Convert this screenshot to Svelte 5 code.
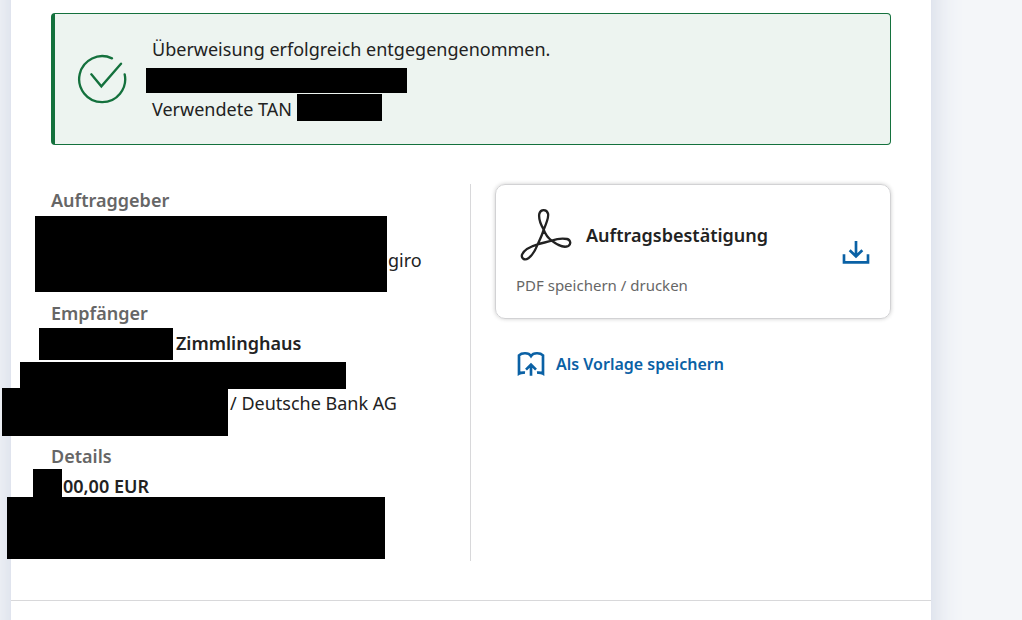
<script>
  const orderer = 'giro';
  const recipient = { name: 'Zimmlinghaus', bank: '/ Deutsche Bank AG' };
  const amount = '00,00 EUR';
</script>

<div class="page">
  <main class="sheet">
    <div class="content">
      <section class="notice" role="status">
        <svg class="check" viewBox="112 162 150 150" aria-hidden="true">
          <path d="M217 175A69 69 0 1 0 255 223M155 223L185 259L244 191" />
        </svg>
        <div class="message">
          <p>Überweisung erfolgreich entgegengenommen.</p>
          <p><span class="mask mask-date"></span></p>
          <p>Verwendete TAN<span class="mask mask-tan"></span></p>
        </div>
      </section>

      <div class="columns">
        <div class="summary">
          <section>
            <h2>Auftraggeber</h2>
            <p></p>
            <p class="after-account">{orderer}</p>
            <span class="mask mask-account"></span>
          </section>
          <section>
            <h2>Empfänger</h2>
            <p class="after-name"><strong>{recipient.name}</strong></p>
            <p></p>
            <p class="after-iban">{recipient.bank}</p>
            <span class="mask mask-name"></span>
            <span class="mask mask-iban"></span>
            <span class="mask mask-bank"></span>
          </section>
          <section>
            <h2>Details</h2>
            <p class="after-amount"><strong>{amount}</strong></p>
            <p></p>
            <p></p>
            <span class="mask mask-amount"></span>
            <span class="mask mask-purpose"></span>
          </section>
        </div>

        <div class="actions">
          <a class="card" href="#pdf">
            <span class="card-body">
              <span class="card-head">
                <svg class="pdf" viewBox="25 20 165 165" aria-hidden="true">
                  <path d="M102 88C112 65 118 50 115 40C111 26 93 26 89 40C86 55 93 72 102 88C108 105 115 113 126 121C145 136 165 142 176 137C185 131 183 119 172 116C155 113 140 116 126 121C112 125 98 128 84 132C60 139 42 150 37 163C34 175 45 181 56 174C68 165 77 150 84 132C92 115 98 103 102 88Z" />
                </svg>
                <strong>Auftragsbestätigung</strong>
              </span>
              <span class="card-note">PDF speichern / drucken</span>
            </span>
            <svg class="icon" viewBox="21 21 84 84" aria-hidden="true">
              <path d="M63 30V75M44 58L63 76L82 58M27 70V94H99V70" />
            </svg>
          </a>
          <button class="template" type="button">
            <svg class="icon" viewBox="22 18 84 84" aria-hidden="true">
              <path d="M46 86C38 85 33 86 28 89V34C36 26 57 25 64 36C71 25 92 26 100 34V89C95 86 90 85 82 86M64 95V63M49 77L64 62L79 77" />
            </svg>
            Als Vorlage speichern
          </button>
        </div>
      </div>
    </div>
    <footer></footer>
  </main>
</div>

<style>
  :global(body) {
    margin: 0;
    background: #f4f6f9;
  }

  .page {
    overflow: hidden;
    padding: 0 91px 0 11px;
  }

  /* The sheet runs past the top and bottom so that its shadow stays even. */
  .sheet {
    box-sizing: border-box;
    min-height: calc(100vh + 80px);
    margin: -40px 0;
    padding: 40px 0;
    background: #fff;
    box-shadow: 0 0 30px #cdd3e2;
    color: #222;
    font: 18px/30px "Noto Sans", "Open Sans", sans-serif;
  }

  .content {
    padding: 13px 40px 39px;
  }

  p,
  h2 {
    min-height: 30px;
    margin: 0;
    font-size: 18px;
    line-height: 30px;
  }

  h2 {
    color: #666;
    font-weight: 600;
  }

  strong {
    font-weight: 600;
  }

  svg {
    flex: none;
    fill: none;
    stroke: currentColor;
  }

  .notice {
    display: flex;
    align-items: center;
    gap: 25px;
    padding: 20px 22px;
    border: 1px solid #14713d;
    border-left-width: 4px;
    border-radius: 4px;
    background: #edf4f0;
  }

  .check {
    width: 50px;
    height: 50px;
    color: #14713d;
    stroke-width: 7;
    stroke-linecap: round;
  }

  .message p {
    position: relative;
  }

  .columns {
    display: grid;
    grid-template-columns: 1fr 1fr;
    margin-top: 39px;
  }

  .summary {
    display: flex;
    flex-direction: column;
    gap: 23px;
    padding-top: 1px;
    border-right: 1px solid #d8d8da;
  }

  .summary section {
    position: relative;
  }

  .mask {
    position: absolute;
    background: #000;
  }

  .mask-date { left: -6px; top: 4px; width: 261px; height: 25px; }
  .mask-tan { left: 145px; top: 0; width: 85px; height: 27px; }
  .mask-account { left: -16px; top: 31px; width: 352px; height: 76px; }
  .mask-name { left: -12px; top: 30px; width: 134px; height: 32px; }
  .mask-iban { left: -31px; top: 64px; width: 326px; height: 27px; }
  .mask-bank { left: -49px; top: 90px; width: 226px; height: 48px; }
  .mask-amount { left: -18px; top: 28px; width: 29px; height: 29px; }
  .mask-purpose { left: -44px; top: 56px; width: 378px; height: 62px; }

  .after-account { padding-left: 337px; }
  .after-name { padding-left: 125px; }
  .after-iban { padding-left: 179px; }
  .after-amount { padding-left: 12px; }

  .actions {
    padding-left: 24px;
  }

  .card {
    display: flex;
    align-items: center;
    justify-content: space-between;
    padding: 22px 20px;
    border: 1px solid #d2d2d4;
    border-radius: 10px;
    box-shadow: 0 0 4px #0003;
    color: #222;
    text-decoration: none;
  }

  .card-body {
    display: flex;
    flex-direction: column;
    gap: 12px;
  }

  .card-head {
    display: flex;
    align-items: center;
    gap: 13px;
    padding-left: 2px;
  }

  .card-note {
    color: #666;
    font-size: 15px;
    line-height: 22px;
  }

  .pdf {
    width: 55px;
    height: 55px;
    stroke-width: 7;
  }

  .icon {
    width: 28px;
    height: 28px;
    color: #0a61a5;
    stroke-width: 8;
  }

  .template {
    display: flex;
    align-items: center;
    gap: 11px;
    margin: 30px 0 0 22px;
    padding: 0;
    border: 0;
    background: none;
    color: #0a61a5;
    font: 600 16px/30px "Noto Sans", "Open Sans", sans-serif;
    cursor: pointer;
  }

  footer {
    border-top: 1px solid #d8d8da;
  }
</style>
